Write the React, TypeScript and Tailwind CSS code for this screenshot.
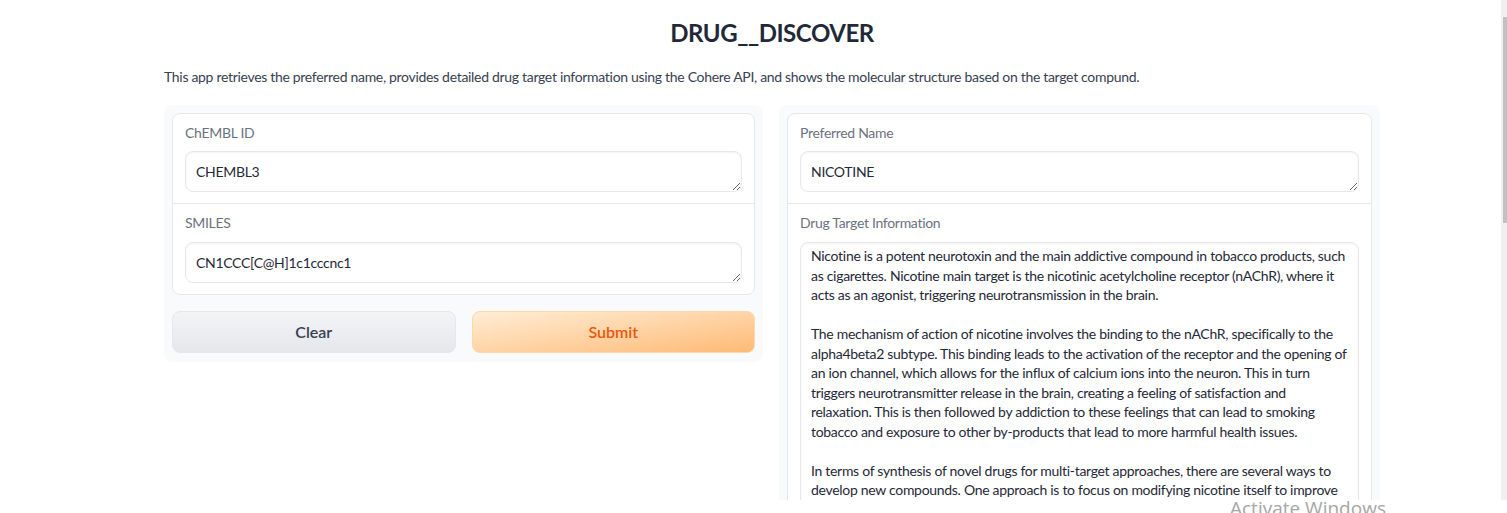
import React from "react";

const lines = [
  "Nicotine is a potent neurotoxin and the main addictive compound in tobacco products, such",
  "as cigarettes. Nicotine main target is the nicotinic acetylcholine receptor (nAChR), where it",
  "acts as an agonist, triggering neurotransmission in the brain.",
  "",
  "The mechanism of action of nicotine involves the binding to the nAChR, specifically to the",
  "alpha4beta2 subtype. This binding leads to the activation of the receptor and the opening of",
  "an ion channel, which allows for the influx of calcium ions into the neuron. This in turn",
  "triggers neurotransmitter release in the brain, creating a feeling of satisfaction and",
  "relaxation. This is then followed by addiction to these feelings that can lead to smoking",
  "tobacco and exposure to other by-products that lead to more harmful health issues.",
  "",
  "In terms of synthesis of novel drugs for multi-target approaches, there are several ways to",
  "develop new compounds. One approach is to focus on modifying nicotine itself to improve",
  "its selectivity and reduce its addictive potential, while preserving its beneficial effects.",
];

function SmallBox({ value }: { value: string }) {
  return (
    <textarea
      readOnly
      rows={1}
      value={value}
      className="block w-full h-[41px] rounded-lg border border-[#e5e7eb] bg-white px-[10px] py-[10px] text-[14px] leading-[19px] tracking-[-0.3px] text-[#1f2937] shadow-[inset_0_1px_2px_rgba(0,0,0,0.05)] outline-none resize-y overflow-hidden"
    />
  );
}

function Block({ label, children, top }: { label: string; children: React.ReactNode; top?: boolean }) {
  return (
    <div className={top ? "px-[12px] pt-[9px] pb-[11px]" : "px-[12px] pt-[9px] pb-[11px] border-t border-[#e5e7eb]"}>
      <div className={top ? "text-[14px] leading-[20px] tracking-[-0.3px] text-[#6b7280] mb-[8px]" : "text-[14px] leading-[20px] tracking-[-0.3px] text-[#6b7280] mb-[9px]"}>
        {label}
      </div>
      {children}
    </div>
  );
}

export default function App() {
  return (
    <div
      className="w-[1507px] h-[513px] flex flex-col bg-white overflow-hidden relative"
      style={{ fontFamily: "Lato, 'Noto Sans', sans-serif" }}
    >
      <div className="h-[500px] flex">
        <div className="flex-1 overflow-hidden">
          <div className="ml-[164px] w-[1216px]">
            <h1 className="pt-[17px] text-center text-[24px] leading-[32px] font-bold text-[#1f2937] tracking-[-0.45px]">
              DRUG__DISCOVER
            </h1>
            <p className="mt-[18px] text-[14px] leading-[20px] tracking-[-0.31px] text-[#374151] whitespace-nowrap">
              This app retrieves the preferred name, provides detailed drug target information using the Cohere API, and shows the molecular structure based on the target compund.
            </p>
            <div className="mt-[18px] flex gap-[16px] items-start">
              {/* left */}
              <div className="w-[599px] rounded-lg bg-[#f9fafb] p-[8px] pb-[9px]">
                <div className="rounded-lg border border-[#e5e7eb] bg-white">
                  <Block label="ChEMBL ID" top>
                    <SmallBox value="CHEMBL3" />
                  </Block>
                  <Block label="SMILES">
                    <SmallBox value="CN1CCC[C@H]1c1cccnc1" />
                  </Block>
                </div>
                <div className="mt-[16px] flex gap-[16px]">
                  <button className="flex-1 h-[42px] rounded-lg border border-[#e5e7eb] bg-gradient-to-b from-[#f3f4f6] to-[#e5e7eb] text-[16px] font-semibold text-[#374151]">
                    Clear
                  </button>
                  <button className="flex-1 h-[42px] rounded-lg border border-[#fed7aa] bg-gradient-to-br from-[#ffedd5] to-[#fdba74] text-[16px] font-semibold text-[#ea580c]">
                    Submit
                  </button>
                </div>
              </div>
              {/* right */}
              <div className="w-[601px] rounded-lg bg-[#f9fafb] p-[8px] pb-0">
                <div className="rounded-lg border border-[#e5e7eb] bg-white">
                  <Block label="Preferred Name" top>
                    <SmallBox value="NICOTINE" />
                  </Block>
                  <Block label="Drug Target Information">
                    <div className="rounded-lg border border-[#e5e7eb] bg-white px-[10px] pt-[3px] pb-[10px] h-[320px] overflow-hidden text-[14px] leading-[19.5px] tracking-[-0.3px] text-[#1f2937] shadow-[inset_0_1px_2px_rgba(0,0,0,0.05)]">
                      {lines.map((l, i) => (
                        <div key={i} className="whitespace-nowrap h-[19.5px]">
                          {l}
                        </div>
                      ))}
                    </div>
                  </Block>
                </div>
              </div>
            </div>
          </div>
        </div>
        {/* scrollbar */}
        <div className="w-[6px] bg-[#f0f0f0] flex flex-col items-end pt-[17px]">
          <div className="w-[4px] h-[206px] bg-[#c1c1c1]" />
        </div>
      </div>
      <div className="h-[13px] bg-white" />
      <div
        className="absolute left-[1230px] top-[496px] text-[19px] leading-[24px] text-[#a6a6a6] whitespace-nowrap"
        style={{ fontFamily: "'Open Sans', 'Noto Sans', sans-serif" }}
      >
        Activate Windows
      </div>
    </div>
  );
}
